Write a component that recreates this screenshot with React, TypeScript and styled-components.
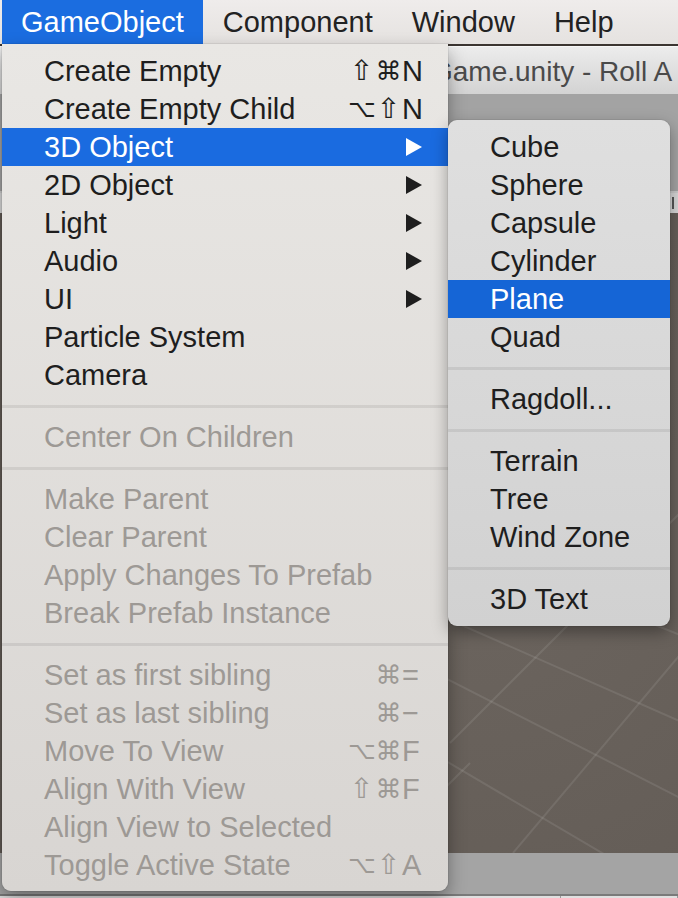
import React from "react";
import styled, { createGlobalStyle, css } from "styled-components";

const Global = createGlobalStyle`
  html, body { margin: 0; padding: 0; background: #5b5652; }
  body { font-family: "Liberation Sans", Arial, sans-serif; }
`;

const Screen = styled.div`
  position: relative;
  width: 678px;
  height: 898px;
  overflow: hidden;
  display: flex;
  flex-direction: column;
  background: #6f6f6f;
`;

const MenuBar = styled.div`
  position: relative;
  z-index: 5;
  height: 44px;
  flex: none;
  display: flex;
  padding-left: 2px;
  background: linear-gradient(#efeceb, #e5e2e0);
`;

const MenuTitle = styled.div<{ $active?: boolean }>`
  position: relative;
  padding: 0 19px 0 19px;
  margin-right: 1px;
  line-height: 44px;
  font-size: 29px;
  color: #222;
  white-space: nowrap;
  ${(p) =>
    p.$active &&
    css`
      background: #1b6de0;
      color: #fff;
    `}
`;

const Wallpaper = styled.div`
  height: 2px;
  flex: none;
  background: #3b3531;
`;

const TitleBar = styled.div`
  height: 44px;
  flex: none;
  padding: 3px 0 0 431px;
  border-top: 1px solid #f7f7f7;
  background: linear-gradient(#ececec, #d3d3d3);
  font-size: 28px;
  line-height: 44px;
  color: #4a4a4a;
  white-space: nowrap;
`;

const Toolbar = styled.div`
  height: 97px;
  flex: none;
  background: #a3a3a3;
`;

const TabStrip = styled.div`
  height: 20px;
  flex: none;
  display: flex;
  justify-content: flex-end;
  align-items: center;
  padding-right: 4px;
  border-top: 2px solid #c9c9c9;
  background: #d6d6d6;
`;

const TabMark = styled.span`
  width: 2px;
  height: 12px;
  background: #555;
`;

const Scene = styled.div`
  flex: 1;
  position: relative;
  background: radial-gradient(circle at 70% 50%, #6c655f, #615a54);
`;

const SceneSvg = styled.svg`
  display: block;
  width: 100%;
  height: 100%;
`;

const StatusBar = styled.div`
  height: 41px;
  flex: none;
  background: #a4a4a4;
  border-bottom: 2px solid #7a7a7a;
`;

const BottomStrip = styled.div`
  height: 7px;
  flex: none;
  display: flex;
  background: #e0e0e0;
`;

const BottomCell = styled.div<{ $w?: number }>`
  width: ${(p) => (p.$w ? `${p.$w}px` : "auto")};
  flex: ${(p) => (p.$w ? "none" : "1")};
  border-right: 1px solid #9a9a9a;
`;

const Dropdown = styled.div`
  position: absolute;
  top: 100%;
  left: 0;
  width: 446px;
  padding: 8px 0 7px;
  background: linear-gradient(#e9e7e4, #d8d5d2);
  border-radius: 0 0 9px 9px;
  box-shadow: 0 8px 18px rgba(0, 0, 0, 0.35), 0 0 0 1px rgba(0, 0, 0, 0.06);
  z-index: 10;
`;

const Submenu = styled.div`
  position: absolute;
  left: 100%;
  top: -8px;
  width: 222px;
  padding: 8px 0;
  background: linear-gradient(#dfdfdf, #d1d1d1);
  border-radius: 9px;
  box-shadow: 0 6px 16px rgba(0, 0, 0, 0.35), 0 0 0 1px rgba(0, 0, 0, 0.05);
  z-index: 11;
`;

const Row = styled.div<{ $active?: boolean; $disabled?: boolean; $sub?: boolean }>`
  position: relative;
  display: flex;
  align-items: center;
  height: 38px;
  padding: 0 25px 0 42px;
  font-size: 29px;
  line-height: 38px;
  white-space: nowrap;
  color: ${(p) => (p.$disabled ? "#9d9995" : "#1e1e1e")};
  ${(p) =>
    p.$active &&
    css`
      background: ${p.$sub ? "#1565d6" : "#1a6be0"};
      color: #fff;
    `}
`;

const Label = styled.span`
  flex: 1;
`;

const Separator = styled.div`
  height: 24px;
  display: flex;
  align-items: center;
  &::before {
    content: "";
    flex: 1;
    height: 3px;
    background: rgba(0, 0, 0, 0.075);
  }
`;

const Shortcut = styled.span`
  display: flex;
  align-items: center;
`;

const modSize: Record<string, string> = { "⇧": "28px", "⌘": "26px", "⌥": "24px" };

const Mod = styled.span<{ $glyph: string }>`
  width: 27px;
  text-align: center;
  font-family: "DejaVu Sans", sans-serif;
  font-size: ${(p) => modSize[p.$glyph] || "24px"};
`;

const Key = styled.span`
  width: 21px;
  font-size: 29px;
`;

const Arrow = styled.svg`
  display: block;
  width: 16px;
  height: 18px;
  margin-right: 1px;
`;

type Item =
  | "sep"
  | {
      label: string;
      mods?: string[];
      k?: string;
      arrow?: boolean;
      active?: boolean;
      disabled?: boolean;
      sub?: boolean;
    };

const mainItems: Item[] = [
  { label: "Create Empty", mods: ["⇧", "⌘"], k: "N" },
  { label: "Create Empty Child", mods: ["⌥", "⇧"], k: "N" },
  { label: "3D Object", arrow: true, active: true, sub: true },
  { label: "2D Object", arrow: true },
  { label: "Light", arrow: true },
  { label: "Audio", arrow: true },
  { label: "UI", arrow: true },
  { label: "Particle System" },
  { label: "Camera" },
  "sep",
  { label: "Center On Children", disabled: true },
  "sep",
  { label: "Make Parent", disabled: true },
  { label: "Clear Parent", disabled: true },
  { label: "Apply Changes To Prefab", disabled: true },
  { label: "Break Prefab Instance", disabled: true },
  "sep",
  { label: "Set as first sibling", mods: ["⌘"], k: "=", disabled: true },
  { label: "Set as last sibling", mods: ["⌘"], k: "−", disabled: true },
  { label: "Move To View", mods: ["⌥", "⌘"], k: "F", disabled: true },
  { label: "Align With View", mods: ["⇧", "⌘"], k: "F", disabled: true },
  { label: "Align View to Selected", disabled: true },
  { label: "Toggle Active State", mods: ["⌥", "⇧"], k: "A", disabled: true },
];

const subItems: Item[] = [
  { label: "Cube" },
  { label: "Sphere" },
  { label: "Capsule" },
  { label: "Cylinder" },
  { label: "Plane", active: true },
  { label: "Quad" },
  "sep",
  { label: "Ragdoll..." },
  "sep",
  { label: "Terrain" },
  { label: "Tree" },
  { label: "Wind Zone" },
  "sep",
  { label: "3D Text" },
];

const renderSub = () => (
  <Submenu>
    {subItems.map((it, i) =>
      it === "sep" ? (
        <Separator key={i} />
      ) : (
        <Row key={i} $active={it.active} $sub>
          <Label>{it.label}</Label>
        </Row>
      )
    )}
  </Submenu>
);

const gridLines: [number, number, number, number][] = [
  [300, 480, 700, 640],
  [300, 551, 700, 727],
  [300, 601, 700, 805],
  [300, 672, 760, 943],
  [513, 850, 700, 628],
  [450, 740, 700, 490],
  [380, 850, 470, 760],
];

export default function App() {
  return (
    <>
      <Global />
      <Screen>
        <MenuBar>
          <MenuTitle $active>
            GameObject
            <Dropdown>
              {mainItems.map((it, i) =>
                it === "sep" ? (
                  <Separator key={i} />
                ) : (
                  <Row key={i} $active={it.active} $disabled={it.disabled}>
                    <Label>{it.label}</Label>
                    {it.k && (
                      <Shortcut>
                        {it.mods?.map((m, j) => (
                          <Mod key={j} $glyph={m}>
                            {m}
                          </Mod>
                        ))}
                        <Key>{it.k}</Key>
                      </Shortcut>
                    )}
                    {it.arrow && (
                      <Arrow viewBox="0 0 16 18">
                        <polygon points="0,0 16,9 0,18" fill={it.active ? "#fff" : "#1e1e1e"} />
                      </Arrow>
                    )}
                    {it.sub && renderSub()}
                  </Row>
                )
              )}
            </Dropdown>
          </MenuTitle>
          <MenuTitle>Component</MenuTitle>
          <MenuTitle>Window</MenuTitle>
          <MenuTitle>Help</MenuTitle>
        </MenuBar>
        <Wallpaper />
        <TitleBar>Game.unity - Roll A</TitleBar>
        <Toolbar />
        <TabStrip>
          <TabMark />
        </TabStrip>
        <Scene>
          <SceneSvg viewBox="0 210 678 640" preserveAspectRatio="none">
            {gridLines.map(([x1, y1, x2, y2], i) => (
              <line key={i} x1={x1} y1={y1} x2={x2} y2={y2} stroke="rgba(255,255,255,0.09)" strokeWidth="2" />
            ))}
          </SceneSvg>
        </Scene>
        <StatusBar />
        <BottomStrip>
          <BottomCell $w={560} />
          <BottomCell />
        </BottomStrip>
      </Screen>
    </>
  );
}
